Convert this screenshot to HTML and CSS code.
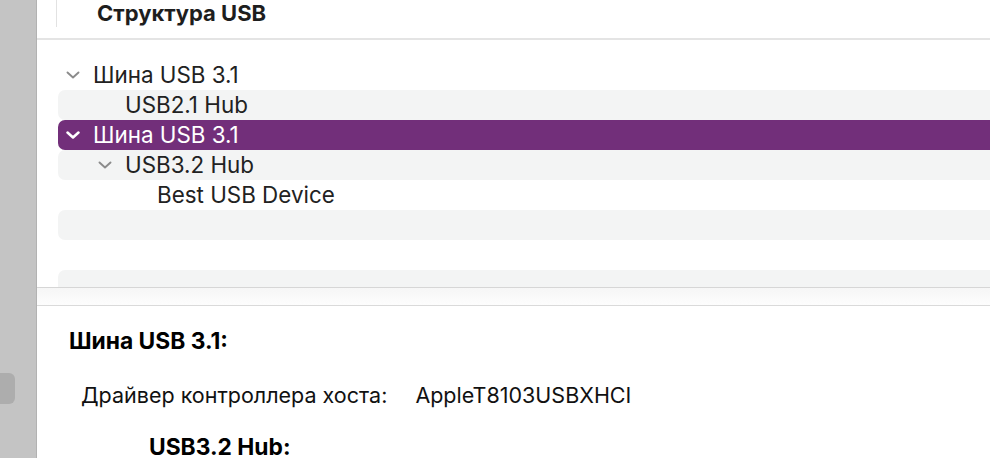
FILE: index.html
```html
<!DOCTYPE html>
<html lang="ru">
<head>
    <meta charset="UTF-8">
    <title>Структура USB</title>
    <link rel="stylesheet" href="styles.css">
</head>
<body>
    <div class="sidebar">
        <div class="thumb"></div>
    </div>
    <div class="main">
        <div class="header">
            <div class="col-edge"></div>
            <div class="title">Структура USB</div>
        </div>

        <div class="tree">
            <div class="row">
                <span class="chev"><svg viewBox="0 0 14 8" width="14" height="8"><polyline points="1.5,1.5 7,6.5 12.5,1.5"/></svg></span>
                <span class="label">Шина USB 3.1</span>
            </div>
            <div class="row stripe lvl1">
                <span class="chev"></span>
                <span class="label">USB2.1 Hub</span>
            </div>
            <div class="row selected">
                <span class="chev"><svg viewBox="0 0 14 8" width="14" height="8"><polyline points="1.5,1.5 7,6.5 12.5,1.5"/></svg></span>
                <span class="label">Шина USB 3.1</span>
            </div>
            <div class="row stripe lvl1">
                <span class="chev"><svg viewBox="0 0 14 8" width="14" height="8"><polyline points="1.5,1.5 7,6.5 12.5,1.5"/></svg></span>
                <span class="label">USB3.2 Hub</span>
            </div>
            <div class="row lvl2">
                <span class="chev"></span>
                <span class="label">Best USB Device</span>
            </div>
            <div class="row stripe"></div>
            <div class="row"></div>
            <div class="row stripe"></div>
        </div>

        <div class="splitter"></div>

        <div class="details">
            <div class="d-title">Шина USB 3.1:</div>
            <div class="d-line">
                <span class="d-key">Драйвер контроллера хоста:</span>
                <span class="d-val">AppleT8103USBXHCI</span>
            </div>
            <div class="d-sub">USB3.2 Hub:</div>
        </div>
    </div>
</body>
</html>
```

FILE: styles.css
```css
html, body {
    margin: 0;
    height: 100%;
}
body {
    display: flex;
    overflow: hidden;
    font-family: Inter, "Noto Sans", sans-serif;
    color: #222;
    background: #fff;
}
.sidebar {
    width: 36px;
    flex: none;
    background: #c4c4c4;
    border-right: 1px solid #b2b2b2;
    position: relative;
}
.thumb {
    position: absolute;
    left: 0;
    top: 373px;
    width: 15px;
    height: 31px;
    background: #adadad;
    border-radius: 0 6px 6px 0;
}
.main {
    flex: 1;
    min-width: 0;
    display: flex;
    flex-direction: column;
    overflow: hidden;
}
.header {
    flex: none;
    height: 38px;
    border-bottom: 2px solid #e4e4e4;
    display: flex;
    align-items: flex-start;
}
.col-edge {
    margin-left: 19px;
    width: 1px;
    height: 27px;
    background: #e2e2e2;
}
.title {
    margin-left: 40px;
    font-weight: 700;
    font-size: 22px;
    line-height: 26px;
    color: #1e1e1e;
}
.tree {
    flex: none;
    height: 227px;
    padding-top: 20px;
    padding-left: 21px;
    overflow: hidden;
}
.row {
    box-sizing: border-box;
    height: 30px;
    padding-bottom: 2px;
    display: flex;
    align-items: center;
    font-size: 22.4px;
    border-radius: 7px 0 0 7px;
}
.row.stripe {
    background: #f3f4f4;
}
.row.selected {
    background: #722f7a;
    color: #fff;
}
.chev {
    width: 14px;
    margin-left: 8px;
    margin-right: 13px;
    padding-top: 2px;
    display: flex;
    align-items: center;
}
.chev polyline {
    fill: none;
    stroke: #8b8b8b;
    stroke-width: 1.9;
    stroke-linecap: round;
    stroke-linejoin: round;
}
.selected .chev polyline {
    stroke: #fff;
    stroke-width: 2.5;
}
.lvl1 .chev {
    margin-left: 40px;
}
.lvl2 .chev {
    margin-left: 72px;
}
.splitter {
    flex: none;
    height: 17px;
    border-top: 1px solid #d6d6d6;
    border-bottom: 1px solid #dadada;
    background: linear-gradient(#f6f6f6, #fdfdfd);
}
.details {
    flex: none;
    padding-left: 32px;
    font-size: 21.5px;
    color: #111;
}
.d-title {
    font-weight: 700;
    font-size: 22.8px;
    margin-top: 23px;
    line-height: 24px;
    color: #000;
}
.d-line {
    margin-top: 30px;
    margin-left: 12px;
    line-height: 24px;
}
.d-val {
    margin-left: 22px;
}
.d-sub {
    font-weight: 700;
    font-size: 22.8px;
    margin-top: 30px;
    margin-left: 80px;
    line-height: 20px;
    color: #000;
}
```
